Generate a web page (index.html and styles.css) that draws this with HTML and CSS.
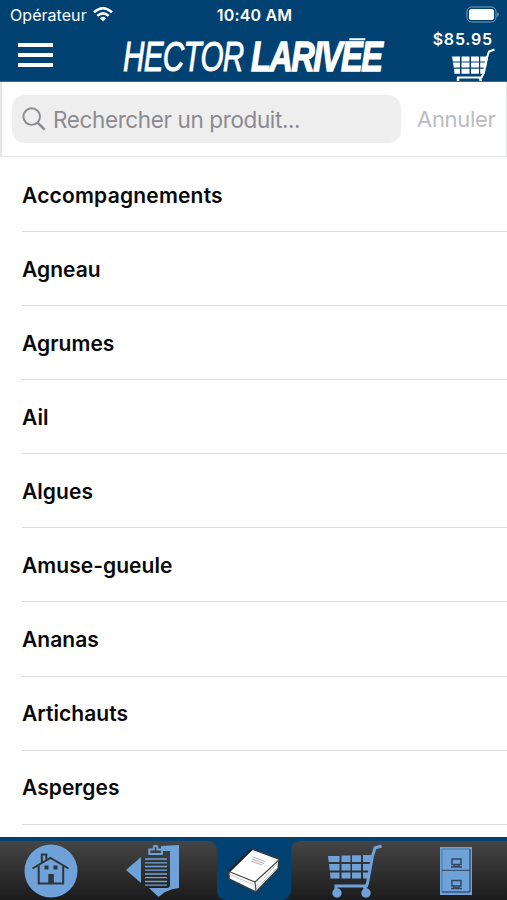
FILE: index.html
```html
<!DOCTYPE html>
<html lang="fr">
<head>
<meta charset="utf-8">
<title>Hector Larivée</title>
<link rel="stylesheet" href="styles.css">
</head>
<body>
<div class="app">
  <header class="header">
    <div class="status">
      <div class="carrier"><span class="carrier-name">Opérateur</span>
        <svg class="wifi" viewBox="0 0 20 15" width="20" height="15"><g fill="none" stroke="#fff" stroke-width="2.5"><path d="M1 5.3Q10-2.7 19 5.3"/><path d="M4.3 8.9Q10 3.9 15.7 8.9"/></g><path d="M6.7 11.3Q10 8.3 13.3 11.3L10 14.6Z" fill="#fff"/></svg>
      </div>
      <div class="clock">10:40 AM</div>
      <svg class="battery" viewBox="0 0 33 17" width="33" height="17"><rect x="1" y="1" width="29" height="15" rx="4.500" fill="none" stroke="#7f9fba" stroke-width="1"/><rect x="3" y="3" width="25" height="11" rx="2.500" fill="#fff"/><path d="M31.300 6v5q1.500-1 1.500-2.500T31.300 6" fill="#7f9fba"/></svg>
    </div>
    <div class="brandbar">
      <button class="menu" aria-label="Menu"><span></span><span></span><span></span></button>
      <svg class="logo" viewBox="0 0 264 42" width="264" height="42">
        <text class="logo-light" transform="translate(2 36) scale(.69 1)">HECTOR</text>
        <text class="logo-bold" transform="translate(130 36) scale(.757 1)">LARIVEE</text>
        <path d="M228.500 3.200h16l-.4 2h-16z" fill="#fff"/>
      </svg>
      <div class="total">
        <span class="amount">$85.95</span>
        <svg class="mini-cart" viewBox="0 0 44 34" width="44" height="34">
          <path d="M42.500 1.500l-5.500 2-2 6-3.500 16-2 4H5" fill="none" stroke="#fff" stroke-width="2"/>
          <path fill="#fff" d="M0 8.500h8v4.900H.8zM9.500 8.500h8v4.900h-8zM19 8.500h8v4.900h-8zM28.200 8.500h8l-1 4.900h-7zM1 14.600h7v5H1.700zM9.500 14.600h8v5h-8zM19 14.600h8v5h-8zM28.200 14.600h7l-1 5h-6zM2 20.800h6v5H2.500zM9.500 20.800h8v5h-8zM19 20.800h8v5h-8zM28.200 20.800h5.500l-1 5h-4.500z"/>
          <path d="M6 29.500v4M28 30l1 4" fill="none" stroke="#fff" stroke-width="2.400"/>
        </svg>
      </div>
    </div>
  </header>
  <div class="search">
    <div class="field">
      <svg class="lens" viewBox="0 0 24 24" width="24" height="24" fill="none" stroke="#8b8b8f"><circle cx="9.700" cy="9.600" r="8.300" stroke-width="1.900"/><path d="M15.600 15.600L22.600 22.600" stroke-width="2.500"/></svg>
      <span class="placeholder">Rechercher un produit...</span>
    </div>
    <span class="cancel">Annuler</span>
  </div>
  <ul class="list">
    <li>Accompagnements</li>
    <li>Agneau</li>
    <li>Agrumes</li>
    <li>Ail</li>
    <li>Algues</li>
    <li>Amuse-gueule</li>
    <li>Ananas</li>
    <li>Artichauts</li>
    <li>Asperges</li>
  </ul>
  <nav class="tabs">
    <div class="side left">
      <div class="tab"><svg viewBox="0 0 54 54" width="54" height="54"><circle cx="27" cy="27" r="26.500" fill="#6fa2d8"/><g fill="none" stroke="#30363c" stroke-width="2"><path d="M8.500 24.500L26.500 14 44.500 24.500M14.700 22v17.500h24.500V22M17.800 18.500V10.500h4.500v5"/></g><path fill="#30363c" d="M20.500 21.500h4v4h-4zM29.500 21.500h4v4h-4zM24.300 30h5.500v9h-5.500z"/></svg></div>
      <div class="tab"><svg viewBox="0 0 54 54" width="54" height="54"><path fill="#6fa2d8" d="M0 26L15 13v26zM35 2L53 1v43q-7 .5-14 4l-6.500 5L23 44h18q3 0 3-3V7h-9z"/><path fill="none" stroke="#6fa2d8" stroke-width="2" d="M23.300 10V5.500h4.500V3.500a1.800 1.800 0 0 1 3.600 0v2h4.500V10z"/><path fill="none" stroke="#6fa2d8" stroke-width="1.300" d="M19 15h22M19 18.800h22M19 22.500h22M19 26.200h22M19 30h22M19 33.700h22M19 37.500h22M19 41.200h22"/></svg></div>
    </div>
    <div class="middle"><div class="active"><svg viewBox="0 0 54 54" width="54" height="54"><path d="M25 5L52 15 51 25 29 48 2 35V27.500Z" fill="#fff" stroke="#353b40" stroke-width="1.500"/><path d="M2 27.500L28 38 52 16M28 38L29 47" fill="none" stroke="#4a4a4a" stroke-width="1.200"/><path d="M2 30L27 41M50 20L29 42M51 23L29 45" fill="none" stroke="#bbb" stroke-width=".8"/><path d="M2 27.500L25 5" stroke="#222" stroke-width="2"/><path d="M26 13L38 17.500M25 15L37 19.500M24 17L35 21" stroke="#999" stroke-width=".8"/></svg></div></div>
    <div class="side right">
      <div class="tab"><svg viewBox="0 0 54 54" width="54" height="54"><path fill="none" stroke="#6fa2d8" stroke-width="3" d="M53.500 2l-6.500 2-2.500 8-5 27-1 3H8v4M36 42l2 5"/><path fill="#6fa2d8" d="M0 12h11.500v6H.7zM13.500 11.500h9v6.500h-9zM24 11.300h9V18h-9zM35 11h10l-1 7h-9zM1 20h10.500v6.500H1.800zM13.500 20h9v6.500h-9zM24 20h9v6.500h-9zM35 20h8.500l-1 6.500H35zM2 28.500h9.500v6H2.500zM13.500 28.500h9v6h-9zM24 28.500h9v6h-9zM35 28.500h7l-1 6h-6z"/><circle cx="9" cy="49" r="4.700" fill="#6fa2d8"/><circle cx="38" cy="49" r="4.700" fill="#6fa2d8"/></svg></div>
      <div class="tab"><svg viewBox="0 0 34 50" width="34" height="50"><path fill="#6fa2d8" d="M1 1h32v48H1z"/><g fill="none" stroke="#30465c" stroke-width="1"><path stroke="#4c759f" d="M3 3h28v42q0 1-1 1H3z"/><path d="M3 24.300h28M31 3v43H3"/><path stroke-width="1.400" d="M13 13h9v5.500h-9zM15 18.500v2h5v-2M12 21h11M13 34.500h9V40h-9zM15 40v2h5v-2M12 42.500h11"/></g></svg></div>
    </div>
  </nav>
</div>
</body>
</html>
```
FILE: styles.css
```css
* { box-sizing: border-box; }
body { margin: 0; background: #fff; font-family: Inter, "Liberation Sans", sans-serif; }
svg { display: block; flex: none; }
.app { width: 507px; height: 900px; overflow: hidden; display: flex; flex-direction: column; }
.header { height: 82px; flex: none; overflow: hidden; background: #014273; color: #fff; border-bottom: 1px solid #3d6491; }
.status { height: 30px; padding: 0 8px 0 10px; display: grid; grid-template-columns: 1fr auto 1fr; align-items: center; }
.carrier { display: flex; align-items: center; gap: 6px; font-size: 16px; }
.carrier-name { letter-spacing: .05px; }
.wifi { margin-top: -1px; }
.clock { font-size: 16px; font-weight: 600; letter-spacing: .15px; }
.battery { justify-self: end; margin-top: -2px; }
.brandbar { display: flex; height: 52px; align-items: flex-start; }
.menu { width: 35px; height: 24px; margin: 13px 0 0 18px; padding: 0; border: 0; background: none; display: flex; flex-direction: column; justify-content: space-between; }
.menu span { display: block; width: 35px; height: 4px; background: #fff; }
.logo { margin: 5px 0 0 68px; overflow: visible; }
.logo text { font-family: "Liberation Sans", Arial, sans-serif; font-style: italic; font-size: 43px; fill: #fff; stroke: #fff; }
.logo .logo-light { stroke-width: .9px; letter-spacing: -1px; }
.logo .logo-bold { font-weight: 700; stroke-width: 1.3px; letter-spacing: -2px; }
.total { margin: 1px 13px 0 auto; display: flex; flex-direction: column; align-items: flex-end; }
.amount { font-size: 16px; line-height: 17px; font-weight: 600; letter-spacing: .8px; margin-right: 1px; }
.mini-cart { margin: 0 -2px 0 0; }
.search { height: 75px; flex: none; display: flex; align-items: center; padding: 0 10px; border: solid #e5e6e8; border-width: 0 1px 1px 2px; }
.field { width: 389px; height: 48px; flex: none; border-radius: 13px; background: #eee; display: flex; align-items: center; padding-left: 10px; color: #8b8b8f; }
.placeholder { margin-left: 7px; font-size: 22.500px; letter-spacing: -.38px; white-space: nowrap; padding-top: 1px; }
.cancel { margin-left: 16px; font-size: 22px; letter-spacing: -.3px; color: #bcbcc0; }
.list { margin: 0; padding: 0 0 0 22px; list-style: none; flex: 1; }
.list li { height: 74.100px; border-bottom: 1px solid #dcdcdc; display: flex; align-items: center; color: #080808; font-size: 21px; font-weight: 600; letter-spacing: .04px; padding-top: 1px; }
.list li:first-child { height: 75px; padding-top: 3px; letter-spacing: .2px; }
.tabs { height: 63px; flex: none; display: flex; background: #014273; padding-top: 4px; }
.side { display: flex; justify-content: space-between; background: linear-gradient(#454545, #1b1b1b); }
.left { width: 217px; padding: 0 37px 0 24px; border-top-right-radius: 9px; }
.right { flex: 1; padding: 0 34px 0 37px; border-top-left-radius: 9px; }
.tab { display: flex; align-items: center; }
.middle { width: 74px; background: linear-gradient(#014273 0 60%, #1f1f1f 60%); }
.active { height: 100%; display: flex; justify-content: center; align-items: center; background: #014273; border-radius: 0 0 9px 9px; }
```
